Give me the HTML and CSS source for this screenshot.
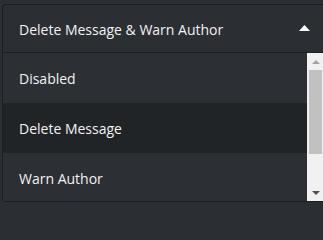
FILE: index.html
```html
<!DOCTYPE html>
<html>
<head>
<meta charset="utf-8">
<link rel="stylesheet" href="styles.css">
</head>
<body>
<div class="select">
  <div class="select-head">
    <span class="select-value">Delete Message &amp; Warn Author</span>
    <svg class="caret" width="11" height="6" viewBox="0 0 11 6"><polygon points="0,6 5.5,0 11,6" fill="#ffffff"/></svg>
  </div>
  <div class="dropdown">
    <ul class="options">
      <li class="option">Disabled</li>
      <li class="option active">Delete Message</li>
      <li class="option">Warn Author</li>
    </ul>
    <div class="scrollbar">
      <div class="sb-btn"><svg width="8" height="4" viewBox="0 0 8 4"><polygon points="0,4 4,0 8,4" fill="#a3a3a3"/></svg></div>
      <div class="sb-track"><div class="sb-thumb"></div></div>
      <div class="sb-btn"><svg width="8" height="4" viewBox="0 0 8 4"><polygon points="0,0 8,0 4,4" fill="#505050"/></svg></div>
    </div>
  </div>
</div>
</body>
</html>
```
FILE: styles.css
```css
html, body {
  margin: 0;
  padding: 0;
  background: #2b2e33;
  width: 323px;
  height: 209px;
  overflow: hidden;
}
body {
  font-family: "Open Sans", "Liberation Sans", sans-serif;
  font-size: 14px;
  color: #f2f2f2;
  padding: 4px 0 0 2px;
  box-sizing: border-box;
}
.select {
  width: 321px;
  box-sizing: border-box;
  border: 1px solid #1c1e21;
  border-right: none;
  border-radius: 4px 0 0 4px;
  background: #2b2e33;
}
.select-head {
  height: 48px;
  display: flex;
  align-items: center;
  padding: 1px 0 0 16px;
  box-sizing: border-box;
  border-bottom: 1px solid #1c1e21;
}
.select-value {
  flex: 1;
}
.caret {
  margin-right: 13px;
  margin-top: -3px;
}
.dropdown {
  display: flex;
  height: 148px;
}
.options {
  list-style: none;
  margin: 0;
  padding: 0;
  flex: 1;
  overflow: hidden;
}
.option {
  height: 50px;
  flex-shrink: 0;
  display: flex;
  align-items: center;
  padding-left: 16px;
  background: #2c2f34;
}
.option.active {
  background: #212427;
}
.scrollbar {
  width: 16px;
  background: #f1f1f1;
  display: flex;
  flex-direction: column;
}
.sb-btn {
  height: 17px;
  display: flex;
  align-items: center;
  justify-content: center;
  padding-left: 1px;
}
.sb-track {
  flex: 1;
  padding-left: 2px;
}
.sb-thumb {
  height: 84px;
  width: 13px;
  background: #c1c1c1;
}
```
